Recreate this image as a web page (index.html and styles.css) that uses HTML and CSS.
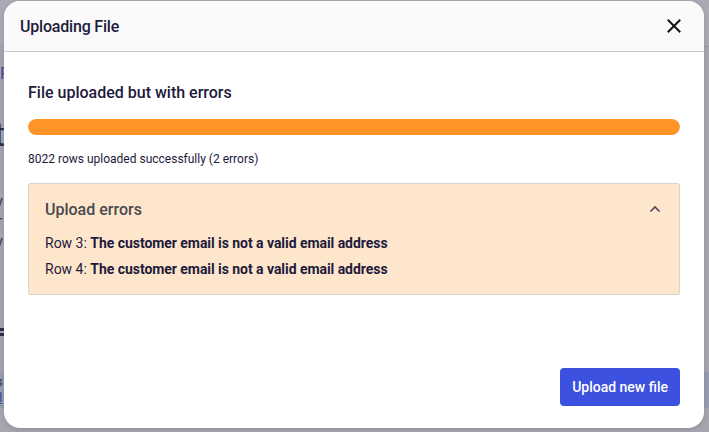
FILE: index.html
```html
<!DOCTYPE html>
<html>
<head>
<meta charset="utf-8">
<link rel="stylesheet" href="styles.css">
</head>
<body>
<div class="page">
  <div class="page-top"></div>
  <div class="page-link">F</div>
  <div class="page-title">t</div>
  <div class="page-lines"><span>V</span><span>T</span><span>V</span></div>
  <div class="page-eq">=</div>
  <div class="page-band"><span class="s">s</span><span class="u">d</span></div>
</div>
<div class="overlay"></div>
<div class="modal">
  <div class="modal-header">
    <h2 class="modal-title">Uploading File</h2>
    <button class="close" aria-label="Close">
      <svg width="14" height="14" viewBox="0 0 14 14"><path d="M1.5 1.5 L12.5 12.5 M12.5 1.5 L1.5 12.5" stroke="#111" stroke-width="2" stroke-linecap="square"/></svg>
    </button>
  </div>
  <div class="modal-body">
    <h3 class="status">File uploaded but with errors</h3>
    <div class="progress"><div class="progress-fill" style="width:100%"></div></div>
    <p class="summary">8022 rows uploaded successfully (2 errors)</p>
    <div class="errors">
      <div class="errors-head">
        <span class="errors-title">Upload errors</span>
        <svg class="chev" width="12" height="8" viewBox="0 0 12 8"><path d="M1.5 6.5 L6 2 L10.5 6.5" fill="none" stroke="#4a4a55" stroke-width="1.6"/></svg>
      </div>
      <ul class="error-list">
        <li>Row 3: <b>The customer email is not a valid email address</b></li>
        <li>Row 4: <b>The customer email is not a valid email address</b></li>
      </ul>
    </div>
  </div>
  <div class="modal-footer">
    <button class="primary">Upload new file</button>
  </div>
</div>
</body>
</html>
```
FILE: styles.css
```css
html, body {
  margin: 0;
  padding: 0;
  width: 709px;
  height: 432px;
  overflow: hidden;
  font-family: Roboto, "Noto Sans", sans-serif;
  color: #1d1a3b;
}
.page {
  position: absolute;
  inset: 0;
  background: #f4f4f6;
}
.page-top {
  height: 46px;
  background: #fcfcfd;
  border-bottom: 1px solid #e0e0e6;
}
.page-link {
  position: absolute;
  left: 0;
  top: 64px;
  color: #3b4cd8;
  font-size: 16px;
}
.page-title {
  position: absolute;
  left: -6px;
  top: 114px;
  font-size: 34px;
  line-height: 40px;
  color: #1d1a3b;
}
.page-lines {
  position: absolute;
  left: -6px;
  top: 194px;
  display: flex;
  flex-direction: column;
  font-size: 14px;
  line-height: 20px;
  color: #333;
}
.page-eq {
  position: absolute;
  left: -6px;
  top: 316px;
  font-size: 26px;
  line-height: 30px;
  font-weight: 700;
}
.page-band {
  position: absolute;
  left: 0;
  right: 0;
  top: 372px;
  height: 36px;
  background: #d8e8f6;
  font-size: 13px;
  line-height: 16px;
}
.page-band .s { position: absolute; left: -4px; top: 2px; }
.page-band .u { position: absolute; left: -5px; top: 18px; color: #3b4cd8; text-decoration: underline; }
.overlay {
  position: absolute;
  inset: 0;
  background: rgba(74, 68, 92, 0.45);
}
.modal {
  position: absolute;
  left: 4px;
  top: 1px;
  width: 700px;
  height: 427px;
  background: #fff;
  border-radius: 16px;
  overflow: hidden;
  display: flex;
  flex-direction: column;
  box-shadow: 0 2px 6px rgba(0,0,0,0.12);
}
.modal-header {
  height: 50px;
  background: #fafafa;
  border-bottom: 1px solid #c9c8cf;
  display: flex;
  align-items: center;
  justify-content: space-between;
  padding: 0 23px 0 16px;
  flex-shrink: 0;
}
.modal-title {
  margin: 0;
  font-size: 16px;
  font-weight: 500;
  letter-spacing: -0.2px;
  color: #1d1a3b;
}
.close {
  border: 0;
  background: none;
  padding: 0;
  width: 14px;
  height: 14px;
  display: flex;
}
.modal-body {
  padding: 30px 24px 0 24px;
  flex: 1;
}
.status {
  margin: 0;
  font-size: 16px;
  font-weight: 500;
  line-height: 22px;
  color: #1d1a3b;
}
.progress {
  margin-top: 15px;
  height: 16px;
  border-radius: 8px;
  background: #eee;
  overflow: hidden;
}
.progress-fill {
  height: 100%;
  background: #fe9328;
  border-radius: 8px;
}
.summary {
  margin: 16px 0 0;
  font-size: 12px;
  line-height: 16px;
  color: #1d1a3b;
}
.errors {
  margin-top: 16px;
  background: #fde6cc;
  border: 1px solid #d9d3cd;
  border-radius: 2px;
  padding: 14px 16px 12px 16px;
}
.errors-head {
  display: flex;
  justify-content: space-between;
  align-items: center;
  height: 22px;
}
.errors-title {
  font-size: 16px;
  font-weight: 500;
  color: #4a4850;
}
.chev { margin-right: 2px; }
.error-list {
  list-style: none;
  margin: 10px 0 0;
  padding: 0;
  font-size: 14px;
  line-height: 26px;
  color: #1d1a3b;
}
.error-list b { font-weight: 700; letter-spacing: -0.05px; }
.modal-footer {
  display: flex;
  justify-content: flex-end;
  padding: 0 24px 22px;
}
.primary {
  border: 0;
  background: #3d51e0;
  color: #fff;
  font-family: Roboto, "Noto Sans", sans-serif;
  font-size: 14px;
  font-weight: 500;
  height: 38px;
  padding: 0 12px;
  border-radius: 4px;
}
```
